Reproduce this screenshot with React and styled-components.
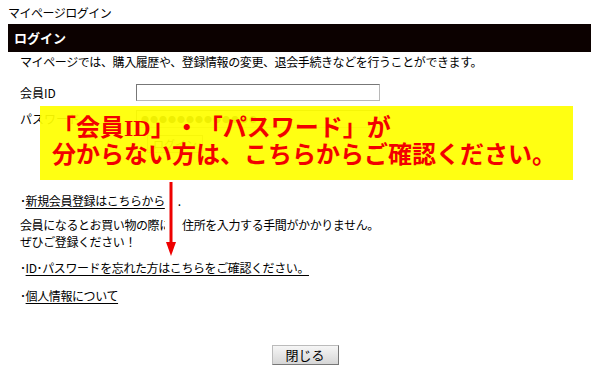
import React from 'react'
import styled, { createGlobalStyle } from 'styled-components';

const GlobalStyle = createGlobalStyle`
    html, body {
        margin: 0;
        padding: 0;
        background: #fff;
    }
    body {
        font-family: "Noto Sans CJK JP", "Liberation Sans", sans-serif;
        font-size: 12px;
        color: #000;
        text-spacing-trim: space-all;
    }
`;

export default function App() {
    return (
        <>
            <GlobalStyle />
            <Page>
                <PageTitle>マイページログイン</PageTitle>
                <HeaderBar>ログイン</HeaderBar>
                <Content>
                    <Lead>マイページでは、購入履歴や、登録情報の変更、退会手続きなどを行うことができます。</Lead>

                    <FormGrid>
                        <Label>会員ID</Label>
                        <TextInput />
                        <Label>パスワード</Label>
                        <TextInput $tall>
                            <Dots>●●●●●●●●●●●●●</Dots>
                        </TextInput>
                        <span />
                        <LoginButton>ログイン</LoginButton>
                    </FormGrid>

                    <LinkLine $top={40}>
                        ･<Link href="#">新規会員登録はこちらから</Link><Trail>.</Trail>
                    </LinkLine>
                    <Note>
                        会員になるとお買い物の際に、住所を入力する手間がかかりません。<br />
                        ぜひご登録ください！
                    </Note>
                    <LinkLine $top={10}>
                        ･<Link href="#">ID･パスワードを忘れた方はこちらをご確認ください。</Link>
                    </LinkLine>
                    <LinkLine $top={12}>
                        ･<Link href="#">個人情報について</Link>
                    </LinkLine>

                    <Footer>
                        <CloseButton>閉じる</CloseButton>
                    </Footer>
                </Content>

                <Callout>
                    「会員ID」・「パスワード」が<br />
                    分からない方は、こちらからご確認ください。
                </Callout>

                <Arrow>
                    <svg width="12" height="75" viewBox="0 0 12 75">
                        <rect x="0" y="0" width="12" height="75" fill="#fff" />
                        <rect x="4.5" y="0" width="3" height="62" fill="#ee0000" />
                        <polygon points="1,60 11,60 6,74" fill="#ee0000" />
                    </svg>
                </Arrow>
            </Page>
        </>
    )
}

const Page = styled.div`
    position: relative;
    width: 583px;
    padding: 6px 9px 0 8px;
`;

const PageTitle = styled.div`
    height: 14px;
    line-height: 14px;
    letter-spacing: -0.5px;
    font-size: 12px;
`;

const HeaderBar = styled.div`
    margin-top: 4px;
    height: 28px;
    line-height: 28px;
    padding-left: 6px;
    background: #0c0100;
    color: #fff;
    font-weight: bold;
    font-size: 13px;
`;

const Content = styled.div`
    padding: 0 12px;
`;

const Lead = styled.div`
    line-height: 18px;
    margin-top: 1px;
    letter-spacing: -0.4px;
`;

const FormGrid = styled.div`
    display: grid;
    grid-template-columns: 116px 244px;
    row-gap: 9px;
    align-items: center;
    margin-top: 13px;
`;

const Label = styled.div`
    line-height: 16px;
`;

const TextInput = styled.div`
    box-sizing: border-box;
    height: ${p => (p.$tall ? 18 : 17)}px;
    border: 1px solid #777;
    border-right-color: #b8b8b8;
    border-bottom-color: #b8b8b8;
    background: #fff;
    overflow: hidden;
    display: flex;
    align-items: center;
    padding-left: 4px;
`;

const Dots = styled.span`
    font-size: 8px;
    letter-spacing: 1px;
    color: #222;
`;

const LoginButton = styled.div`
    box-sizing: border-box;
    margin: -2px 0 0 11px;
    width: 56px;
    height: 18px;
    border: 1px solid #888;
    background: linear-gradient(#fafafa, #dcdcdc);
    font-size: 11px;
    line-height: 16px;
    text-align: center;
`;

const LinkLine = styled.div`
    margin-top: ${p => p.$top}px;
    line-height: 16px;
    letter-spacing: -0.4px;
`;

const Link = styled.a`
    color: #000;
    text-decoration: underline;
    text-underline-offset: 2px;
`;

const Trail = styled.span`
    margin-left: 13px;
`;

const Note = styled.div`
    margin-top: 7px;
    line-height: 17px;
    letter-spacing: -0.4px;
`;

const Footer = styled.div`
    display: flex;
    justify-content: center;
    margin-top: 41px;
    padding-left: 11px;
`;

const CloseButton = styled.button`
    box-sizing: border-box;
    width: 67px;
    height: 20px;
    padding: 0;
    border: 1px solid #777;
    border-top-color: #bbb;
    border-left-color: #bbb;
    background: linear-gradient(#f6f6f6, #d6d6d6);
    font-family: "Noto Sans CJK JP", sans-serif;
    font-size: 13px;
    line-height: 18px;
    color: #000;
`;

const Callout = styled.div`
    position: absolute;
    left: 40px;
    top: 106px;
    box-sizing: border-box;
    width: 533px;
    height: 74px;
    padding: 9px 0 0 12px;
    background: rgba(255, 255, 0, 0.93);
    color: #f20000;
    font-family: "Liberation Serif", "Noto Sans CJK JP", serif;
    font-weight: bold;
    font-size: 24px;
    line-height: 27px;
    white-space: nowrap;
`;

const Arrow = styled.div`
    position: absolute;
    left: 165px;
    top: 182px;
    line-height: 0;
`;
